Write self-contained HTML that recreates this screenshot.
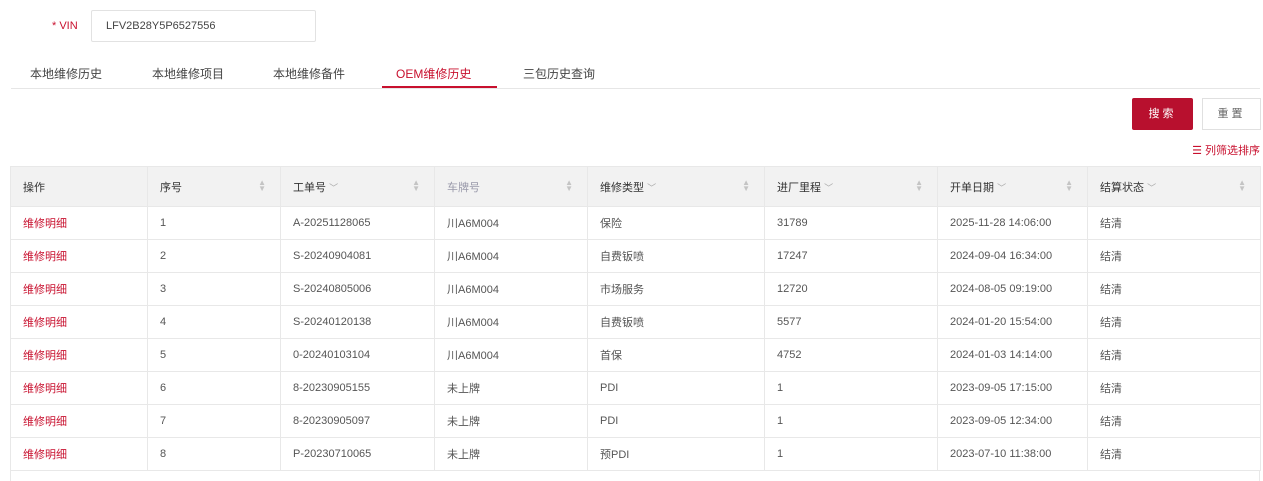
<!DOCTYPE html>
<html><head><meta charset="utf-8"><style>
*{box-sizing:border-box;margin:0;padding:0}
body{width:1263px;height:481px;background:#fff;font-family:"Liberation Sans","Noto Sans CJK SC",sans-serif;font-size:11px;color:#555;position:relative;overflow:hidden}
.abs{position:absolute}
.vin{left:52px;top:20px;color:#c8102e;font-size:11px}
.inp{left:91px;top:10px;width:225px;height:32px;border:1px solid #e2e2e2;border-radius:2px;padding:9px 0 0 14px;color:#444}
.tabs{left:11px;top:62px;width:1249px;height:27px;border-bottom:1px solid #e6e6e6}
.tab{position:absolute;top:3px;font-size:12px;color:#444}
.tab.on{color:#c8102e}
.ul{left:382px;top:86px;width:115px;height:2px;background:#c8102e}
.btn1{left:1132px;top:98px;width:61px;height:32px;background:#b8102e;color:#fff;text-align:center;line-height:32px;border-radius:2px;letter-spacing:3px}
.btn2{left:1202px;top:98px;width:59px;height:32px;border:1px solid #e0e0e0;text-align:center;line-height:30px;letter-spacing:3px;color:#666}
.colsel{right:3px;top:142px;color:#c8102e;font-size:11px}
table{position:absolute;left:10px;top:166px;width:1250px;border-collapse:collapse;table-layout:fixed}
td,th{border:1px solid #e8e8e8;padding:0 0 0 12px;text-align:left;font-weight:normal;height:33px;white-space:nowrap;position:relative}
th{background:#f2f2f2;height:40px;color:#333;font-size:11px}
.s{position:absolute;right:14px;top:13px;color:#c4c4c4;font-size:8px;line-height:6px}
.r{color:#c8102e}
.v{color:#aaa;font-size:9px}
</style></head><body>
<div class="abs vin">* VIN</div>
<div class="abs inp">LFV2B28Y5P6527556</div>
<div class="abs tabs">
<span class="tab" style="left:19px">本地维修历史</span>
<span class="tab" style="left:141px">本地维修项目</span>
<span class="tab" style="left:262px">本地维修备件</span>
<span class="tab on" style="left:385px">OEM维修历史</span>
<span class="tab" style="left:512px">三包历史查询</span>
</div>
<div class="abs ul"></div>
<div class="abs btn1">搜索</div>
<div class="abs btn2">重置</div>
<div class="abs colsel">☰ 列筛选排序</div>
<table>
<colgroup><col style="width:137px"><col style="width:133px"><col style="width:154px"><col style="width:153px"><col style="width:177px"><col style="width:173px"><col style="width:150px"><col style="width:173px"></colgroup>
<tr><th>操作</th><th>序号<span class="s">▲<br>▼</span></th><th>工单号 <span class="v">﹀</span><span class="s">▲<br>▼</span></th><th style="color:#99a">车牌号<span class="s">▲<br>▼</span></th><th>维修类型 <span class="v">﹀</span><span class="s">▲<br>▼</span></th><th>进厂里程 <span class="v">﹀</span><span class="s">▲<br>▼</span></th><th>开单日期 <span class="v">﹀</span><span class="s">▲<br>▼</span></th><th>结算状态 <span class="v">﹀</span><span class="s">▲<br>▼</span></th></tr>
<tr><td class="r">维修明细</td><td>1</td><td>A-20251128065</td><td>川A6M004</td><td>保险</td><td>31789</td><td>2025-11-28 14:06:00</td><td>结清</td></tr>
<tr><td class="r">维修明细</td><td>2</td><td>S-20240904081</td><td>川A6M004</td><td>自费钣喷</td><td>17247</td><td>2024-09-04 16:34:00</td><td>结清</td></tr>
<tr><td class="r">维修明细</td><td>3</td><td>S-20240805006</td><td>川A6M004</td><td>市场服务</td><td>12720</td><td>2024-08-05 09:19:00</td><td>结清</td></tr>
<tr><td class="r">维修明细</td><td>4</td><td>S-20240120138</td><td>川A6M004</td><td>自费钣喷</td><td>5577</td><td>2024-01-20 15:54:00</td><td>结清</td></tr>
<tr><td class="r">维修明细</td><td>5</td><td>0-20240103104</td><td>川A6M004</td><td>首保</td><td>4752</td><td>2024-01-03 14:14:00</td><td>结清</td></tr>
<tr><td class="r">维修明细</td><td>6</td><td>8-20230905155</td><td>未上牌</td><td>PDI</td><td>1</td><td>2023-09-05 17:15:00</td><td>结清</td></tr>
<tr><td class="r">维修明细</td><td>7</td><td>8-20230905097</td><td>未上牌</td><td>PDI</td><td>1</td><td>2023-09-05 12:34:00</td><td>结清</td></tr>
<tr><td class="r">维修明细</td><td>8</td><td>P-20230710065</td><td>未上牌</td><td>预PDI</td><td>1</td><td>2023-07-10 11:38:00</td><td>结清</td></tr>
</table>
<div class="abs" style="left:10px;top:470px;width:1px;height:11px;background:#e8e8e8"></div>
<div class="abs" style="left:1259px;top:470px;width:1px;height:11px;background:#e8e8e8"></div>
</body></html>
